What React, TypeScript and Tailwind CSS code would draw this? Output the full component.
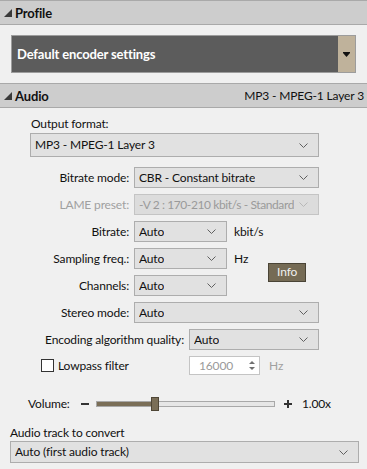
import React from 'react';

const Chevron = ({ color = '#606060' }: { color?: string }) => (
  <svg width="9" height="5" viewBox="0 0 9 5" className="shrink-0">
    <path d="M0.5 0.5 L4.5 4.5 L8.5 0.5" fill="none" stroke={color} strokeWidth="1" />
  </svg>
);

const Corner = () => (
  <svg width="8" height="8" viewBox="0 0 8 8" className="shrink-0">
    <polygon points="8,0 8,8 0,8" fill="#3a3a3a" />
  </svg>
);

type SelectProps = { value: string; className?: string; textClass?: string; disabled?: boolean };

const Select = ({ value, className = '', textClass = '', disabled }: SelectProps) => (
  <div
    className={
      'flex items-center justify-between gap-[2px] border pl-[4px] pr-[10px] ' +
      (disabled
        ? 'border-[#c4c4c4] bg-[#dcdcdc] text-[#9a9a9a] '
        : 'border-[#adadad] bg-[#e1e1e1] text-[#111] ') +
      className
    }
  >
    <span className={'overflow-hidden whitespace-nowrap ' + textClass}>{value}</span>
    <Chevron color={disabled ? '#b8b8b8' : '#606060'} />
  </div>
);

const Row = ({ label, children, disabled }: { label: string; children: React.ReactNode; disabled?: boolean }) => (
  <div className="flex h-[21px] items-center gap-[5px]">
    <div className={'w-[129px] text-right ' + (disabled ? 'text-[#a0a0a0]' : 'text-[#111]')}>{label}</div>
    {children}
  </div>
);

export default function App() {
  return (
    <div
      className="w-[367px] h-[469px] overflow-hidden bg-[#f0f0f0] text-[12px] leading-[16px] tracking-[-0.15px] text-[#111]"
      style={{ fontFamily: 'Lato, "Noto Sans", sans-serif' }}
    >
      {/* Profile header */}
      <div className="flex h-[25px] items-center gap-[3px] border-y border-[#a9a9a9] bg-[#cdcdcd] pl-[4px]">
        <Corner />
        <span className="text-[13px] font-bold text-[#111]">Profile</span>
      </div>

      <div className="mx-[11px] mt-[10px] flex h-[38px] border border-[#9c9c9c]">
        <div className="flex flex-1 items-center bg-[#5c5c5c] pl-[5px] text-[13px] font-bold text-white">
          Default encoder settings
        </div>
        <div className="flex w-[17px] items-center justify-center bg-[#bfb29b]">
          <svg width="7" height="5" viewBox="0 0 7 5">
            <rect x="0" y="0" width="7" height="1" fill="#111" />
            <polygon points="0,1 7,1 3.5,5" fill="#111" />
          </svg>
        </div>
      </div>

      {/* Audio header */}
      <div className="mt-[10px] flex h-[25px] items-center justify-between border-y border-[#a9a9a9] bg-[#cdcdcd] pl-[4px] pr-[3px]">
        <div className="flex items-center gap-[3px]">
          <Corner />
          <span className="text-[13px] font-bold">Audio</span>
        </div>
        <span>MP3 - MPEG-1 Layer 3</span>
      </div>

      <div className="pl-[30px] pt-[8px]">
        <div className="pl-[1px]">Output format:</div>
        <Select value="MP3 - MPEG-1 Layer 3" className="mt-[1px] h-[24px] w-[289px]" />
      </div>

      <div className="mt-[10px] flex flex-col gap-[6px]">
        <Row label="Bitrate mode:">
          <Select value="CBR - Constant bitrate" className="h-[21px] w-[185px]" />
        </Row>
        <Row label="LAME preset:" disabled>
          <Select
            value="-V 2 : 170-210 kbit/s - Standard"
            className="h-[21px] w-[185px] pr-[6px]"
            textClass="tracking-[-0.4px]"
            disabled
          />
        </Row>
        <Row label="Bitrate:">
          <Select value="Auto" className="h-[21px] w-[93px]" />
          <span className="ml-[2px]">kbit/s</span>
        </Row>
        <div className="flex items-center">
          <div className="flex flex-col gap-[6px]">
            <Row label="Sampling freq.:">
              <Select value="Auto" className="h-[21px] w-[93px]" />
              <span className="ml-[2px]">Hz</span>
            </Row>
            <Row label="Channels:">
              <Select value="Auto" className="h-[21px] w-[93px]" />
            </Row>
          </div>
          <div className="ml-[20px] flex h-[19px] w-[38px] items-center justify-center border border-[#4a4436] bg-[#756b55] text-[#f0f0f0]">
            Info
          </div>
        </div>
        <Row label="Stereo mode:">
          <Select value="Auto" className="h-[21px] w-[185px]" />
        </Row>
        <div className="flex h-[21px] items-center gap-[5px]">
          <div className="w-[184px] text-right">Encoding algorithm quality:</div>
          <Select value="Auto" className="h-[21px] w-[130px]" />
        </div>
        <div className="flex h-[19px] items-center">
          <div className="ml-[41px] h-[13px] w-[13px] border border-[#333] bg-white" />
          <span className="ml-[4px] w-[131px]">Lowpass filter</span>
          <div className="flex h-[19px] w-[71px] items-center justify-between border border-[#c4c4c4] bg-white pl-[9px] pr-[4px] text-[#9a9a9a]">
            <span>16000</span>
            <svg width="6" height="11" viewBox="0 0 6 11">
              <polygon points="0,4 6,4 3,1" fill="#707070" />
              <polygon points="0,7 6,7 3,10" fill="#707070" />
            </svg>
          </div>
          <span className="ml-[9px] text-[#a0a0a0]">Hz</span>
        </div>
      </div>

      {/* Volume */}
      <div className="mt-[21px] flex h-[16px] items-center">
        <span className="ml-[28px] w-[53px]">Volume:</span>
        <div className="h-[2px] w-[8px] bg-[#333]" />
        <div className="relative ml-[7px] flex h-[6px] w-[179px] border border-[#a8a8a8] bg-[#e6e6e6]">
          <div className="h-full w-[56px] bg-[#7a6e57]" />
          <div className="absolute left-[54px] top-[-5px] h-[14px] w-[8px] border border-[#4f4636] bg-[#7a6e57]" />
        </div>
        <svg width="8" height="8" viewBox="0 0 8 8" className="ml-[9px]">
          <rect x="0" y="3" width="8" height="2" fill="#333" />
          <rect x="3" y="0" width="2" height="8" fill="#333" />
        </svg>
        <span className="ml-[10px]">1.00x</span>
      </div>

      <div className="mt-[13px] pl-[10px]">Audio track to convert</div>
      <div className="pl-[10px]">
        <Select value="Auto (first audio track)" className="h-[22px] w-[349px]" />
      </div>
    </div>
  );
}
